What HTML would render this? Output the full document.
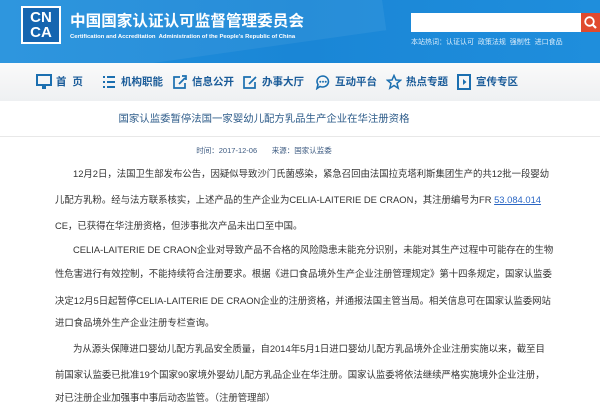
<!DOCTYPE html>
<html><head><meta charset="utf-8">
<style>
*{margin:0;padding:0;box-sizing:border-box}
body{width:600px;height:404px;overflow:hidden;background:#fff;font-family:"Liberation Sans","Noto Sans CJK SC",sans-serif;position:relative}
.hd{position:absolute;left:0;top:0;width:600px;height:63px;background:linear-gradient(90deg,#2190dc 0%,#1a86d6 50%,#1f8edc 100%);overflow:hidden}
.hd:before{content:"";position:absolute;left:-40px;top:-60px;width:420px;height:120px;background:rgba(255,255,255,0.06);transform:rotate(-8deg)}
.logo{position:absolute;left:21px;top:6px;width:40px;height:38px;background:#fff;padding:2px}
.logo div{width:100%;height:100%;background:#1565b0;color:#fff;font:bold 15px/15px "Liberation Sans",sans-serif;text-align:center;padding-top:2px;letter-spacing:0}
.t1{position:absolute;left:70px;top:9px;color:#fff;font-size:15.6px;font-weight:bold;white-space:nowrap}
.t2{position:absolute;left:70px;top:34px;color:#fff;font-size:5.9px;font-weight:bold;white-space:nowrap}
.sb{position:absolute;left:411px;top:13px;width:170px;height:19px;background:#fff}
.sbtn{position:absolute;left:581px;top:13px;width:19px;height:19px;background:#e04a2e}
.hot{position:absolute;left:411px;top:37px;color:#d8ecfb;font-size:7px;white-space:nowrap}
.nav{position:absolute;left:0;top:63px;width:600px;height:38px;background:linear-gradient(#fafafa,#eef0f2)}
.ni{position:absolute;top:13px;color:#1b5c99;font-size:10.5px;font-weight:bold;white-space:nowrap;line-height:12px}
.ni svg{position:absolute;left:-20px;top:-2px}
.title{position:absolute;left:0;width:528px;top:110px;text-align:center;color:#2e5c8a;font-size:10.4px;white-space:nowrap}
.hr{position:absolute;left:0;top:136px;width:600px;height:1px;background:#e8e8e8}
.meta{position:absolute;left:0;width:528px;top:145px;text-align:center;color:#3c5a80;font-size:7.5px;white-space:pre}
.ln{position:absolute;left:55px;color:#333;font-size:9.4px;white-space:nowrap;line-height:12px}
.ln.i{left:73px}
a{color:#2a66c4;text-decoration:underline}
</style></head><body>
<div class="hd">
<div class="logo"><div>CN<br>CA</div></div>
<div class="t1">中国国家认证认可监督管理委员会</div>
<div class="t2">Certification and Accreditation&nbsp; Administration of the People's Republic of China</div>
<div class="sb"></div>
<div class="sbtn"><svg width="19" height="19"><circle cx="8.5" cy="8.5" r="4.3" fill="none" stroke="#fff" stroke-width="1.8"/><line x1="11.5" y1="11.5" x2="15" y2="15" stroke="#fff" stroke-width="2.2"/></svg></div>
<div class="hot">本站热词：认证认可&nbsp; 政策法规&nbsp; 强制性&nbsp; 进口食品</div>
</div>
<div class="nav">
<div class="ni" style="left:56px"><svg width="16" height="16"><rect x="1" y="1" width="14" height="10" fill="none" stroke="#1b6fb0" stroke-width="2"/><rect x="6" y="12" width="4" height="3" fill="#1b6fb0"/></svg>首&nbsp; 页</div>
<div class="ni" style="left:121px"><svg width="16" height="16"><g fill="#1b6fb0"><rect x="2" y="2" width="2" height="2"/><rect x="6" y="2" width="8" height="2"/><rect x="2" y="7" width="2" height="2"/><rect x="6" y="7" width="8" height="2"/><rect x="2" y="12" width="2" height="2"/><rect x="6" y="12" width="8" height="2"/></g></svg>机构职能</div>
<div class="ni" style="left:192px"><svg width="16" height="16"><path d="M8 3H2V14H13V9" fill="none" stroke="#1b6fb0" stroke-width="1.7"/><path d="M7 10L13 4M10 2H14V6" fill="none" stroke="#1b6fb0" stroke-width="1.7"/></svg>信息公开</div>
<div class="ni" style="left:262px"><svg width="16" height="16"><path d="M9 3H2V14H13V8" fill="none" stroke="#1b6fb0" stroke-width="1.7"/><path d="M7 10L14 3" stroke="#1b6fb0" stroke-width="1.7"/></svg>办事大厅</div>
<div class="ni" style="left:335px"><svg width="16" height="16"><path d="M8 2A6 5.5 0 1 1 5 12.5L2 14.5 3 10.5A6 5.5 0 0 1 8 2Z" fill="none" stroke="#1b6fb0" stroke-width="1.6"/><g fill="#1b6fb0"><circle cx="5.3" cy="7.8" r="1"/><circle cx="8" cy="7.8" r="1"/><circle cx="10.7" cy="7.8" r="1"/></g></svg>互动平台</div>
<div class="ni" style="left:406px"><svg width="16" height="16"><path d="M8 1.5L10 6 14.5 6.3 11 9.3 12.2 14.2 8 11.5 3.8 14.2 5 9.3 1.5 6.3 6 6Z" fill="none" stroke="#1b6fb0" stroke-width="1.5"/></svg>热点专题</div>
<div class="ni" style="left:476px"><svg width="16" height="16"><rect x="2" y="1" width="12" height="14" fill="none" stroke="#1b6fb0" stroke-width="2"/><path d="M7 5L10.5 8 7 11Z" fill="#1b6fb0"/></svg>宣传专区</div>
</div>
<div class="title">国家认监委暂停法国一家婴幼儿配方乳品生产企业在华注册资格</div>
<div class="hr"></div>
<div class="meta">时间：2017-12-06       来源：国家认监委</div>
<div class="ln i" style="top:168px">12月2日，法国卫生部发布公告，因疑似导致沙门氏菌感染，紧急召回由法国拉克塔利斯集团生产的共12批一段婴幼</div>
<div class="ln" style="top:194px">儿配方乳粉。经与法方联系核实，上述产品的生产企业为CELIA-LAITERIE DE CRAON，其注册编号为FR <a>53.084.014</a></div>
<div class="ln" style="top:220px">CE，已获得在华注册资格，但涉事批次产品未出口至中国。</div>
<div class="ln i" style="top:244px">CELIA-LAITERIE DE CRAON企业对导致产品不合格的风险隐患未能充分识别，未能对其生产过程中可能存在的生物</div>
<div class="ln" style="top:268px">性危害进行有效控制，不能持续符合注册要求。根据《进口食品境外生产企业注册管理规定》第十四条规定，国家认监委</div>
<div class="ln" style="top:295px">决定12月5日起暂停CELIA-LAITERIE DE CRAON企业的注册资格，并通报法国主管当局。相关信息可在国家认监委网站</div>
<div class="ln" style="top:317px">进口食品境外生产企业注册专栏查询。</div>
<div class="ln i" style="top:343px">为从源头保障进口婴幼儿配方乳品安全质量，自2014年5月1日进口婴幼儿配方乳品境外企业注册实施以来，截至目</div>
<div class="ln" style="top:369px">前国家认监委已批准19个国家90家境外婴幼儿配方乳品企业在华注册。国家认监委将依法继续严格实施境外企业注册，</div>
<div class="ln" style="top:392px">对已注册企业加强事中事后动态监管。（注册管理部）</div>
</body></html>
